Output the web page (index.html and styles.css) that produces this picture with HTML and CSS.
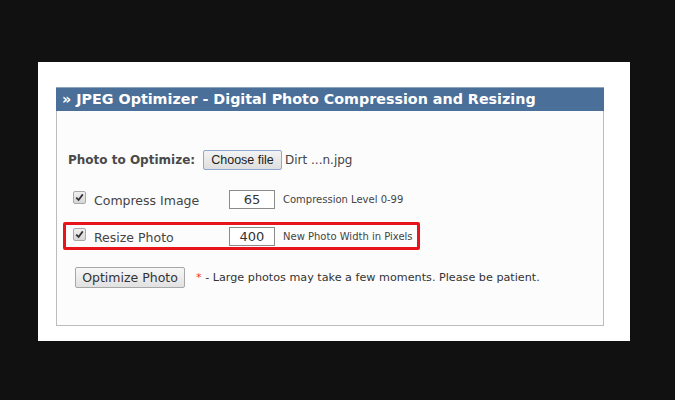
FILE: index.html
```html
<!DOCTYPE html>
<html>
<head>
<meta charset="utf-8">
<link rel="stylesheet" href="styles.css">
</head>
<body>
<div class="stage">
  <div class="card">
    <div class="panel">
      <div class="header">» JPEG Optimizer - Digital Photo Compression and Resizing</div>
      <div class="content">
        <div class="file-row">
          <span class="file-label">Photo to Optimize:</span>
          <span class="choose-btn">Choose file</span>
          <span class="file-name">Dirt ...n.jpg</span>
        </div>
        <div class="opt-row">
          <span class="check"><svg width="9" height="9" viewBox="0 0 9 9"><path d="M1.2 4.6 L3.6 7 L7.8 1.4" fill="none" stroke="#333" stroke-width="1.8"/></svg></span>
          <span class="opt-label">Compress Image</span>
          <span class="num-box">65</span>
          <span class="hint">Compression Level 0-99</span>
        </div>
        <div class="opt-row highlight">
          <span class="check"><svg width="9" height="9" viewBox="0 0 9 9"><path d="M1.2 4.6 L3.6 7 L7.8 1.4" fill="none" stroke="#333" stroke-width="1.8"/></svg></span>
          <span class="opt-label">Resize Photo</span>
          <span class="num-box">400</span>
          <span class="hint">New Photo Width in Pixels</span>
        </div>
        <div class="submit-row">
          <span class="submit-btn">Optimize Photo</span>
          <span class="note"><span class="star">*</span> - Large photos may take a few moments. Please be patient.</span>
        </div>
      </div>
    </div>
  </div>
</div>
</body>
</html>
```
FILE: styles.css
```css
html, body {
  margin: 0;
  padding: 0;
  background: #111111;
  width: 675px;
  height: 400px;
  overflow: hidden;
}
.stage {
  padding: 62px 0 0 38px;
}
.card {
  width: 592px;
  height: 279px;
  background: #ffffff;
  box-sizing: border-box;
  padding: 25px 0 0 18px;
}
.panel {
  width: 548px;
  height: 239px;
  box-sizing: border-box;
  border: 1px solid #bcbcbc;
  border-top: none;
  background: #fcfcfc;
}
.header {
  height: 24px;
  margin: 0 -1px;
  background: #4a6f98;
  border-top: 1px solid #8ea4bd;
  box-sizing: border-box;
  color: #ffffff;
  font-family: "DejaVu Sans", Verdana, sans-serif;
  font-weight: bold;
  font-size: 14.3px;
  line-height: 22px;
  padding-left: 6px;
  white-space: nowrap;
}
.content {
  padding-left: 6px;
}
.file-row {
  display: flex;
  align-items: center;
  height: 20px;
  margin-top: 39px;
  padding-left: 5px;
  font-family: "DejaVu Sans", Verdana, sans-serif;
}
.file-label {
  font-weight: bold;
  font-size: 12px;
  color: #4a4a4a;
  width: 135px;
}
.choose-btn {
  box-sizing: border-box;
  height: 20px;
  width: 79px;
  border: 1px solid #8fa8cf;
  border-radius: 2px;
  background: linear-gradient(#f3f3f3, #dedede);
  font-family: "Liberation Sans", Arial, sans-serif;
  font-size: 12.5px;
  color: #222;
  text-align: center;
  line-height: 18px;
}
.file-name {
  margin-left: 3px;
  font-size: 12px;
  color: #444;
}
.opt-row {
  display: flex;
  align-items: center;
  width: 357px;
  height: 28px;
  box-sizing: border-box;
  border: 3px solid transparent;
  padding-left: 7px;
  margin-top: 15px;
  font-family: "DejaVu Sans", Verdana, sans-serif;
  color: #444;
}
.opt-row.highlight {
  border-color: #e8141c;
  border-radius: 2px;
  margin-top: 9px;
}
.check {
  box-sizing: border-box;
  width: 13px;
  height: 13px;
  border: 1px solid #a9a9a9;
  border-radius: 2px;
  background: linear-gradient(#f0f0f0, #d6d6d6);
  display: flex;
  align-items: center;
  justify-content: center;
  margin-top: -3px;
}
.opt-label {
  margin-left: 8px;
  width: 135px;
  font-size: 12.5px;
  color: #444;
  padding-top: 2px;
}
.num-box {
  box-sizing: border-box;
  width: 46px;
  height: 19px;
  border: 1px solid #8b8b8b;
  background: #fff;
  text-align: center;
  font-size: 13px;
  line-height: 17px;
  color: #333;
}
.hint {
  margin-left: 8px;
  font-size: 10px;
  color: #444;
}
.submit-row {
  display: flex;
  align-items: center;
  margin-top: 17px;
  padding-left: 12px;
  font-family: "DejaVu Sans", Verdana, sans-serif;
}
.submit-btn {
  box-sizing: border-box;
  width: 110px;
  height: 21px;
  border: 1px solid #a7a7a7;
  border-radius: 2px;
  background: linear-gradient(#f7f7f7, #e1e1e1);
  font-size: 12.5px;
  line-height: 19px;
  text-align: center;
  color: #333;
}
.note {
  margin-left: 11px;
  font-size: 11.2px;
  color: #333;
}
.star {
  color: #e33;
}
```
